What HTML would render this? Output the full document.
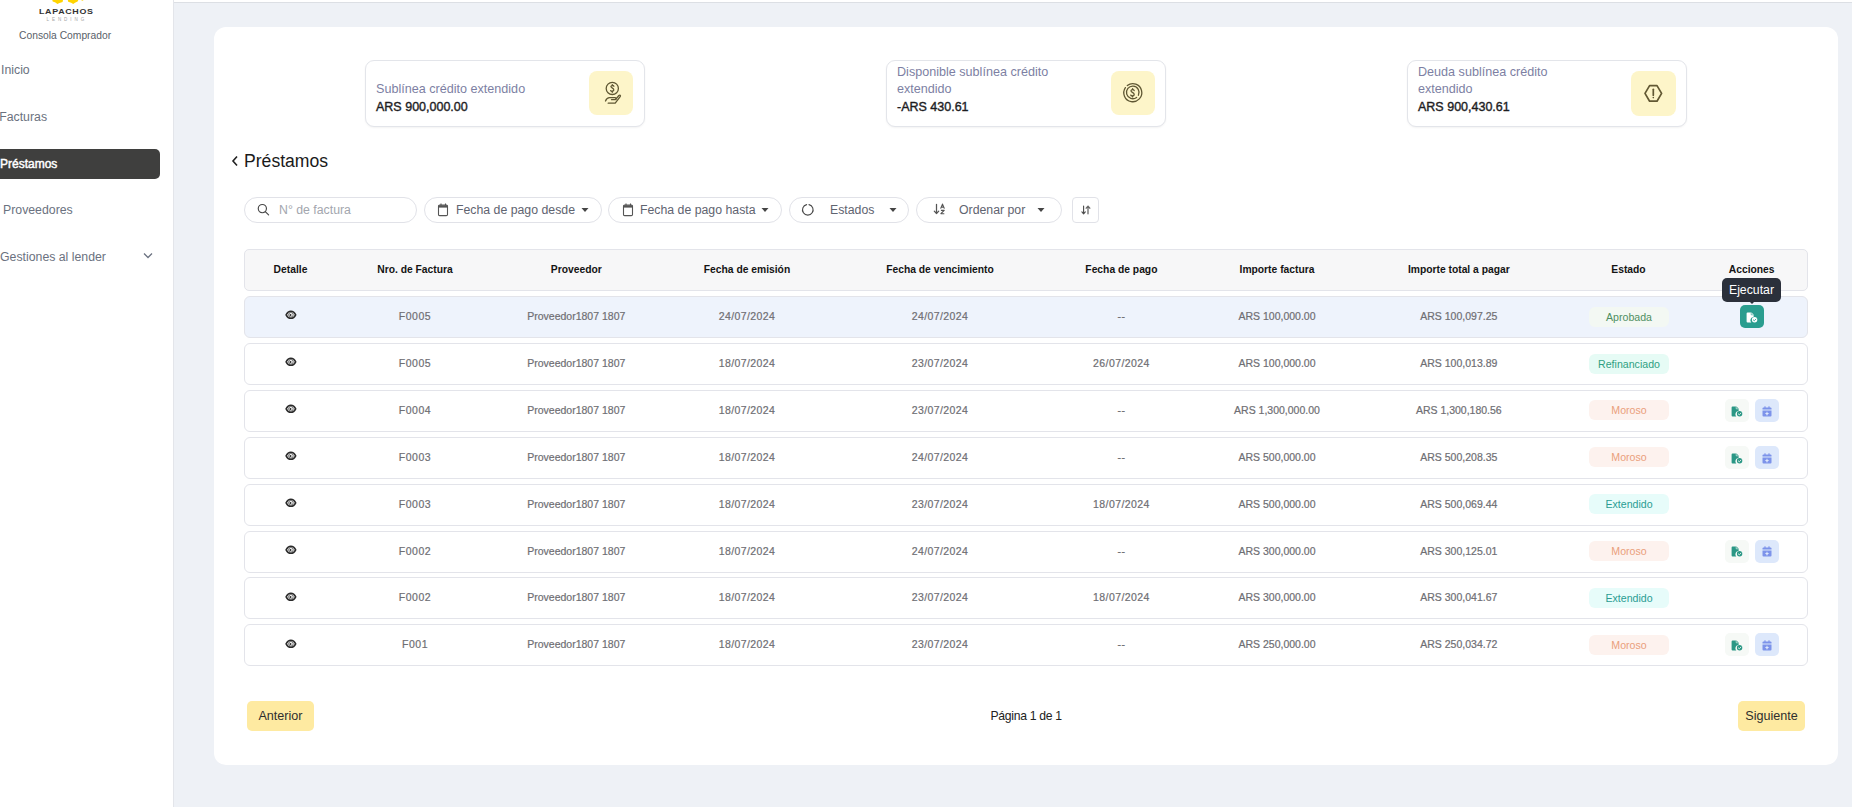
<!DOCTYPE html>
<html>
<head>
<meta charset="utf-8">
<style>
*{box-sizing:border-box;margin:0;padding:0}
html,body{width:1852px;height:807px;overflow:hidden}
body{background:#eef1f6;font-family:"Liberation Sans",sans-serif;position:relative;color:#222}
.abs{position:absolute}
#sidebar{left:0;top:0;width:174px;height:807px;background:#fff;border-right:1px solid #e3e5ea}
#topbar{left:174px;top:0;width:1678px;height:3px;background:#fff;border-bottom:1px solid #dcdfe4}
#card{left:214px;top:27px;width:1624px;height:738px;background:#fff;border-radius:12px}
.nav{position:absolute;font-size:12.3px;color:#6b7280;white-space:nowrap;line-height:14px}
.stat{position:absolute;top:60px;width:280px;height:67px;border:1px solid #e3e5ea;border-radius:9px;background:#fff;box-shadow:0 1px 2px rgba(0,0,0,0.05)}
.stat .lbl{position:absolute;left:10px;font-size:12.6px;color:#7d7fa3;line-height:17px}
.stat .val{position:absolute;left:10px;top:38px;font-size:12.5px;font-weight:400;color:#1d1d1f;line-height:16px;-webkit-text-stroke:0.38px #1d1d1f}
.stat .ib{position:absolute;top:10px;width:44px;height:44px;border-radius:8px;background:#fdf5c9}
.pill{position:absolute;top:197px;height:26px;border:1px solid #e1e2e8;border-radius:13px;background:#fff}
.pill span{position:absolute;top:5px;font-size:12.3px;color:#5f6470;white-space:nowrap;line-height:15px}
.row{position:absolute;left:244px;width:1564px;height:42px;border:1px solid #e3e4ea;border-radius:6px;background:#fff}
.row.hd{background:#f7f7f8;border-radius:5px;height:42px}
.row.sel{background:#eef3fc}
.c{position:absolute;top:0px;height:39px;line-height:39px;text-align:center;white-space:nowrap;font-size:10.5px;color:#6e6e73;-webkit-text-stroke:0.2px #6e6e73}
.c.d{letter-spacing:0.4px}
.c.f{letter-spacing:0.55px}
.hd .c{top:0;font-weight:700;color:#141414;font-size:10.3px;-webkit-text-stroke:0}
.badge{position:absolute;left:1589px;width:80px;height:20px;border-radius:6px;font-size:10.6px;line-height:20px;text-align:center}
.abtn{position:absolute;top:8px;width:24px;height:23px;border-radius:5px;display:flex;align-items:center;justify-content:center;padding-top:1.5px}
.c svg{vertical-align:middle}
.btn{position:absolute;top:701px;height:30px;border-radius:5px;background:#feeaa1;font-size:12.6px;line-height:30px;color:#2e2e2e;text-align:center}
</style>
</head>
<body>
<div id="sidebar" class="abs">
  <!-- logo -->
  <svg class="abs" style="left:0;top:0" width="100" height="8" viewBox="0 0 100 8"><path d="M52.3 0 H63 L62.6 2 L59.5 3.1 L57.4 4 L55.4 2.6 L52.7 1.6 Z" fill="#ffd400"/><path d="M67.8 0 H78.3 L77.6 1.4 L75 2.7 L73.2 4 L71.2 2.7 L68.2 1.7 Z" fill="#ffd400"/><circle cx="82.4" cy="0.2" r="0.9" fill="#ffe266"/></svg>
  <div class="abs" style="left:39px;top:8px;font-size:7.8px;font-weight:700;letter-spacing:0.6px;color:#333;line-height:8px;transform:scaleX(1.14);transform-origin:0 0;white-space:nowrap">LAPACHOS</div>
  <div class="abs" style="left:46.5px;top:17px;font-size:4.5px;letter-spacing:2.95px;color:#a5a5a5;line-height:5px;white-space:nowrap">LENDING</div>
  <div class="abs" style="left:19px;top:30px;font-size:10.3px;color:#5a5f6a;line-height:12px;white-space:nowrap">Consola Comprador</div>
  <div class="nav" style="left:1px;top:63px">Inicio</div>
  <div class="nav" style="left:-0.8px;top:110px">Facturas</div>
  <div class="abs" style="left:-10px;top:149px;width:170px;height:30px;border-radius:5px;background:#3f3f3e"></div>
  <div class="nav" style="left:0px;top:157px;color:#fff;font-size:12px;-webkit-text-stroke:0.45px #fff">Préstamos</div>
  <div class="nav" style="left:3px;top:203px">Proveedores</div>
  <div class="nav" style="left:0px;top:250px">Gestiones al lender</div>
  <svg class="abs" style="left:143px;top:252px" width="10" height="7" viewBox="0 0 10 7"><path d="M1 1.5 L5 5.5 L9 1.5" fill="none" stroke="#6b7280" stroke-width="1.3"/></svg>
</div>
<div id="topbar" class="abs"></div>
<div id="card" class="abs"></div>

<!-- stat cards -->
<div class="stat" style="left:365px">
  <div class="lbl" style="top:20px">Sublínea crédito extendido</div>
  <div class="val">ARS 900,000.00</div>
  <div class="ib" style="left:223px"></div>
</div>
<svg class="abs" style="left:595px;top:75px" width="35" height="35" viewBox="0 0 35 35"><g fill="none" stroke="#5f5733" stroke-width="1.3" stroke-linecap="round" stroke-linejoin="round"><circle cx="17.3" cy="13.4" r="6.1"/><path d="M18.9 11.2 C18.4 10.3 16.2 10.2 15.9 11.5 C15.6 12.9 18.9 13 18.8 14.9 C18.7 16.4 16.4 16.6 15.7 15.6"/><path d="M17.3 9.6 V10.4 M17.3 16.5 V17.3"/><path d="M10.5 26 C11.5 23.6 12.6 22.7 14.5 22.7 H20.2 C21.3 22.7 21.3 24.6 20.3 24.7 H16.5"/><path d="M13.2 28.2 H20.2 L25.2 21.6 C25.9 20.6 24.8 19.6 23.9 20.5 L20.6 24.4"/></g></svg>
<div class="stat" style="left:886px">
  <div class="lbl" style="top:3px">Disponible sublínea crédito<br>extendido</div>
  <div class="val">-ARS 430.61</div>
  <div class="ib" style="left:224px"></div>
</div>
<svg class="abs" style="left:1115px;top:75px" width="35" height="35" viewBox="0 0 35 35"><g fill="none" stroke="#5f5733" stroke-width="1.3" stroke-linecap="round"><path d="M12.3 10.6 A9 9 0 1 1 10.4 12.6"/><path d="M21.6 22.4 A6.3 6.3 0 1 1 23.4 20.2"/><path d="M19.2 15.6 C18.8 14.5 16.3 14.2 16 15.7 C15.7 17.3 19.3 17.4 19.2 19.6 C19.1 21.2 16.4 21.3 15.8 20.1"/><path d="M17.6 13.6 V14.3 M17.6 21.2 V21.9"/></g></svg>
<div class="stat" style="left:1407px">
  <div class="lbl" style="top:3px">Deuda sublínea crédito<br>extendido</div>
  <div class="val">ARS 900,430.61</div>
  <div class="ib" style="left:223px;width:45px;height:45px"></div>
</div>
<svg class="abs" style="left:1636px;top:75px" width="35" height="35" viewBox="0 0 35 35"><g fill="none" stroke="#625833" stroke-width="1.7" stroke-linecap="round" stroke-linejoin="round"><path d="M13.6 10.6 H21 L25.6 18.4 L21 26.2 H13.6 L9 18.4 Z"/><path d="M17.3 14.3 V20.2"/></g><circle cx="17.3" cy="22.6" r="0.8" fill="#5c5530"/></svg>

<!-- heading -->
<svg class="abs" style="left:231px;top:155px" width="8" height="12" viewBox="0 0 8 12"><path d="M6 1.5 L2 6 L6 10.5" fill="none" stroke="#222" stroke-width="1.6"/></svg>
<div class="abs" style="left:244px;top:151px;font-size:17.6px;color:#1a1a1a;line-height:20px">Préstamos</div>

<!-- filters -->
<div class="pill" style="left:244px;width:173px"><span style="left:34px;color:#a3a6ae">N° de factura</span></div>
<div class="pill" style="left:424px;width:178px"><span style="left:31px">Fecha de pago desde</span></div>
<div class="pill" style="left:608px;width:174px"><span style="left:31px">Fecha de pago hasta</span></div>
<div class="pill" style="left:789px;width:120px"><span style="left:40px">Estados</span></div>
<div class="pill" style="left:916px;width:146px"><span style="left:42px">Ordenar por</span></div>
<div class="abs" style="left:1072px;top:197px;width:27px;height:26px;border:1px solid #e1e2e8;border-radius:4px;background:#fff"></div>

<svg class="abs" style="left:255px;top:202px" width="16" height="16" viewBox="0 0 16 16"><circle cx="7.35" cy="6.6" r="4.1" fill="none" stroke="#474747" stroke-width="1.15"/><path d="M10.3 9.6 L13.6 12.9" stroke="#474747" stroke-width="1.15" stroke-linecap="round"/></svg>
<svg class="abs" style="left:437px;top:202px" width="12" height="15" viewBox="0 0 12 15"><path d="M1.5 4.2 Q1.5 3 2.7 3 H9.3 Q10.5 3 10.5 4.2 V12.4 Q10.5 13.6 9.3 13.6 H2.7 Q1.5 13.6 1.5 12.4 Z" fill="none" stroke="#555" stroke-width="1.1"/><rect x="1.5" y="3.2" width="9" height="2.4" fill="#555"/><path d="M4 1.6 V3.5 M8.5 1.6 V3.5" stroke="#555" stroke-width="1.1"/></svg>
<svg class="abs" style="left:580.5px;top:207px" width="8" height="6" viewBox="0 0 8 6"><path d="M0.5 1 H7.5 L4 5 Z" fill="#454545"/></svg>
<svg class="abs" style="left:622px;top:202px" width="12" height="15" viewBox="0 0 12 15"><path d="M1.5 4.2 Q1.5 3 2.7 3 H9.3 Q10.5 3 10.5 4.2 V12.4 Q10.5 13.6 9.3 13.6 H2.7 Q1.5 13.6 1.5 12.4 Z" fill="none" stroke="#555" stroke-width="1.1"/><rect x="1.5" y="3.2" width="9" height="2.4" fill="#555"/><path d="M4 1.6 V3.5 M8.5 1.6 V3.5" stroke="#555" stroke-width="1.1"/></svg>
<svg class="abs" style="left:760.5px;top:207px" width="8" height="6" viewBox="0 0 8 6"><path d="M0.5 1 H7.5 L4 5 Z" fill="#454545"/></svg>
<svg class="abs" style="left:800px;top:202px" width="16" height="16" viewBox="0 0 16 16"><path d="M6.6 2.6 A5.3 5.3 0 1 0 9 2.6" fill="none" stroke="#4a4a4a" stroke-width="1.15" stroke-linecap="round"/></svg>
<svg class="abs" style="left:889px;top:207px" width="8" height="6" viewBox="0 0 8 6"><path d="M0.5 1 H7.5 L4 5 Z" fill="#454545"/></svg>
<svg class="abs" style="left:932px;top:202px" width="16" height="14" viewBox="0 0 16 14"><path d="M4.5 2.3 V11.5 M2.3 9.2 L4.5 11.6 L6.7 9.2" fill="none" stroke="#555" stroke-width="1.25" stroke-linecap="round" stroke-linejoin="round"/><path d="M8.6 6.6 L10.5 2.1 L12.4 6.6 M9.3 5.1 H11.7" fill="none" stroke="#555" stroke-width="1.15" stroke-linejoin="round"/><path d="M8.9 8.3 H12.2 L8.9 11.7 H12.3" fill="none" stroke="#555" stroke-width="1.15" stroke-linejoin="round"/></svg>
<svg class="abs" style="left:1037px;top:207px" width="8" height="6" viewBox="0 0 8 6"><path d="M0.5 1 H7.5 L4 5 Z" fill="#454545"/></svg>
<svg class="abs" style="left:1078px;top:203px" width="16" height="14" viewBox="0 0 16 14"><path d="M5.6 3 V10.6 M3.9 8.8 L5.6 10.8 L7.3 8.8" fill="none" stroke="#4a4a4a" stroke-width="1.1" stroke-linecap="round" stroke-linejoin="round"/><path d="M10 10.8 V3.4 M8.2 5.2 L10 3.1 L11.8 5.2" fill="none" stroke="#6a6a6a" stroke-width="1.3" stroke-linecap="round" stroke-linejoin="round"/></svg>

<!-- table -->
<div id="table">
<div class="row hd" style="top:249px"><div class="c " style="left:-74.5px;width:240px">Detalle</div><div class="c " style="left:50.0px;width:240px">Nro. de Factura</div><div class="c " style="left:211.3px;width:240px">Proveedor</div><div class="c " style="left:382.0px;width:240px">Fecha de emisión</div><div class="c " style="left:575.0px;width:240px">Fecha de vencimiento</div><div class="c " style="left:756.4px;width:240px">Fecha de pago</div><div class="c " style="left:912.0px;width:240px">Importe factura</div><div class="c " style="left:1093.8px;width:240px">Importe total a pagar</div><div class="c " style="left:1263.5px;width:240px">Estado</div><div class="c " style="left:1386.7px;width:240px">Acciones</div></div>
<div class="row sel" style="top:296.2px"><div style="position:absolute;left:39.5px;top:13.3px;width:12px;height:10px"><svg style="display:block" width="12" height="10" viewBox="0 0 12 10"><path d="M1.1 4.8 C2.4 2.2 3.9 1.3 5.9 1.3 C7.9 1.3 9.4 2.2 10.7 4.8 C9.4 7.4 7.9 8.3 5.9 8.3 C3.9 8.3 2.4 7.4 1.1 4.8 Z" fill="#fff" stroke="#2a2a2a" stroke-width="1.55" stroke-linejoin="round"/><circle cx="5.9" cy="4.8" r="2.3" fill="#fff" stroke="#3a3a3a" stroke-width="0.75"/><circle cx="5.5" cy="5.1" r="1" fill="#2a2a2a"/></svg></div><div class="c f" style="left:50.0px;width:240px">F0005</div><div class="c " style="left:211.3px;width:240px">Proveedor1807 1807</div><div class="c d" style="left:382.0px;width:240px">24/07/2024</div><div class="c d" style="left:575.0px;width:240px">24/07/2024</div><div class="c d" style="left:756.4px;width:240px">--</div><div class="c " style="left:912.0px;width:240px">ARS 100,000.00</div><div class="c " style="left:1093.8px;width:240px">ARS 100,097.25</div><div class="badge" style="left:1344px;top:9.5px;background:#f3f8f3;color:#4f8f62">Aprobada</div><div class="abtn" style="left:1495px;background:#2a9d8f"><svg width="12" height="11" viewBox="0 0 12 11"><path d="M0.6 1.4 Q0.6 0.4 1.6 0.4 H5.4 L7.6 2.6 V5 A3.3 3.3 0 0 0 5.3 10.6 H1.6 Q0.6 10.6 0.6 9.6 Z" fill="#ffffff"/><path d="M5.2 0.6 V2.8 H7.4" fill="none" stroke="#2a9d8f" stroke-width="0.6"/><circle cx="8.6" cy="7.8" r="2.7" fill="#ffffff"/><path d="M7.3 7.9 L8.3 8.8 L9.9 7.1" fill="none" stroke="#2a9d8f" stroke-width="0.85" stroke-linecap="round"/></svg></div></div>
<div class="row" style="top:343.1px"><div style="position:absolute;left:39.5px;top:13.3px;width:12px;height:10px"><svg style="display:block" width="12" height="10" viewBox="0 0 12 10"><path d="M1.1 4.8 C2.4 2.2 3.9 1.3 5.9 1.3 C7.9 1.3 9.4 2.2 10.7 4.8 C9.4 7.4 7.9 8.3 5.9 8.3 C3.9 8.3 2.4 7.4 1.1 4.8 Z" fill="#fff" stroke="#2a2a2a" stroke-width="1.55" stroke-linejoin="round"/><circle cx="5.9" cy="4.8" r="2.3" fill="#fff" stroke="#3a3a3a" stroke-width="0.75"/><circle cx="5.5" cy="5.1" r="1" fill="#2a2a2a"/></svg></div><div class="c f" style="left:50.0px;width:240px">F0005</div><div class="c " style="left:211.3px;width:240px">Proveedor1807 1807</div><div class="c d" style="left:382.0px;width:240px">18/07/2024</div><div class="c d" style="left:575.0px;width:240px">23/07/2024</div><div class="c d" style="left:756.4px;width:240px">26/07/2024</div><div class="c " style="left:912.0px;width:240px">ARS 100,000.00</div><div class="c " style="left:1093.8px;width:240px">ARS 100,013.89</div><div class="badge" style="left:1344px;top:9.5px;background:#e6fbf5;color:#2f9f82">Refinanciado</div></div>
<div class="row" style="top:389.9px"><div style="position:absolute;left:39.5px;top:13.3px;width:12px;height:10px"><svg style="display:block" width="12" height="10" viewBox="0 0 12 10"><path d="M1.1 4.8 C2.4 2.2 3.9 1.3 5.9 1.3 C7.9 1.3 9.4 2.2 10.7 4.8 C9.4 7.4 7.9 8.3 5.9 8.3 C3.9 8.3 2.4 7.4 1.1 4.8 Z" fill="#fff" stroke="#2a2a2a" stroke-width="1.55" stroke-linejoin="round"/><circle cx="5.9" cy="4.8" r="2.3" fill="#fff" stroke="#3a3a3a" stroke-width="0.75"/><circle cx="5.5" cy="5.1" r="1" fill="#2a2a2a"/></svg></div><div class="c f" style="left:50.0px;width:240px">F0004</div><div class="c " style="left:211.3px;width:240px">Proveedor1807 1807</div><div class="c d" style="left:382.0px;width:240px">18/07/2024</div><div class="c d" style="left:575.0px;width:240px">23/07/2024</div><div class="c d" style="left:756.4px;width:240px">--</div><div class="c " style="left:912.0px;width:240px">ARS 1,300,000.00</div><div class="c " style="left:1093.8px;width:240px">ARS 1,300,180.56</div><div class="badge" style="left:1344px;top:9.5px;background:#fdf2ee;color:#eaa07c">Moroso</div><div class="abtn" style="left:1480px;background:#f6f9f6"><svg width="12" height="11" viewBox="0 0 12 11"><path d="M0.6 1.4 Q0.6 0.4 1.6 0.4 H5.4 L7.6 2.6 V5 A3.3 3.3 0 0 0 5.3 10.6 H1.6 Q0.6 10.6 0.6 9.6 Z" fill="#2a9785"/><path d="M5.2 0.6 V2.8 H7.4" fill="none" stroke="#f6f9f6" stroke-width="0.6"/><circle cx="8.6" cy="7.8" r="2.7" fill="#2a9785"/><path d="M7.3 7.9 L8.3 8.8 L9.9 7.1" fill="none" stroke="#f6f9f6" stroke-width="0.85" stroke-linecap="round"/></svg></div><div class="abtn" style="left:1510px;background:#dde8fb"><svg width="10" height="11" viewBox="0 0 10 11"><path d="M0.5 3.6 V2.6 Q0.5 1.6 1.5 1.6 H8.5 Q9.5 1.6 9.5 2.6 V3.6 Z" fill="#7d93ea"/><rect x="2.4" y="0.2" width="1.2" height="2" rx="0.4" fill="#7d93ea"/><rect x="6.4" y="0.2" width="1.2" height="2" rx="0.4" fill="#7d93ea"/><path d="M0.5 4.6 H9.5 V9.5 Q9.5 10.5 8.5 10.5 H1.5 Q0.5 10.5 0.5 9.5 Z" fill="#7d93ea"/><path d="M5 5.3 L5.7 7 L7.3 7.6 L5.7 8.2 L5 9.9 L4.3 8.2 L2.7 7.6 L4.3 7 Z" fill="#dfe9fb"/></svg></div></div>
<div class="row" style="top:436.8px"><div style="position:absolute;left:39.5px;top:13.3px;width:12px;height:10px"><svg style="display:block" width="12" height="10" viewBox="0 0 12 10"><path d="M1.1 4.8 C2.4 2.2 3.9 1.3 5.9 1.3 C7.9 1.3 9.4 2.2 10.7 4.8 C9.4 7.4 7.9 8.3 5.9 8.3 C3.9 8.3 2.4 7.4 1.1 4.8 Z" fill="#fff" stroke="#2a2a2a" stroke-width="1.55" stroke-linejoin="round"/><circle cx="5.9" cy="4.8" r="2.3" fill="#fff" stroke="#3a3a3a" stroke-width="0.75"/><circle cx="5.5" cy="5.1" r="1" fill="#2a2a2a"/></svg></div><div class="c f" style="left:50.0px;width:240px">F0003</div><div class="c " style="left:211.3px;width:240px">Proveedor1807 1807</div><div class="c d" style="left:382.0px;width:240px">18/07/2024</div><div class="c d" style="left:575.0px;width:240px">24/07/2024</div><div class="c d" style="left:756.4px;width:240px">--</div><div class="c " style="left:912.0px;width:240px">ARS 500,000.00</div><div class="c " style="left:1093.8px;width:240px">ARS 500,208.35</div><div class="badge" style="left:1344px;top:9.5px;background:#fdf2ee;color:#eaa07c">Moroso</div><div class="abtn" style="left:1480px;background:#f6f9f6"><svg width="12" height="11" viewBox="0 0 12 11"><path d="M0.6 1.4 Q0.6 0.4 1.6 0.4 H5.4 L7.6 2.6 V5 A3.3 3.3 0 0 0 5.3 10.6 H1.6 Q0.6 10.6 0.6 9.6 Z" fill="#2a9785"/><path d="M5.2 0.6 V2.8 H7.4" fill="none" stroke="#f6f9f6" stroke-width="0.6"/><circle cx="8.6" cy="7.8" r="2.7" fill="#2a9785"/><path d="M7.3 7.9 L8.3 8.8 L9.9 7.1" fill="none" stroke="#f6f9f6" stroke-width="0.85" stroke-linecap="round"/></svg></div><div class="abtn" style="left:1510px;background:#dde8fb"><svg width="10" height="11" viewBox="0 0 10 11"><path d="M0.5 3.6 V2.6 Q0.5 1.6 1.5 1.6 H8.5 Q9.5 1.6 9.5 2.6 V3.6 Z" fill="#7d93ea"/><rect x="2.4" y="0.2" width="1.2" height="2" rx="0.4" fill="#7d93ea"/><rect x="6.4" y="0.2" width="1.2" height="2" rx="0.4" fill="#7d93ea"/><path d="M0.5 4.6 H9.5 V9.5 Q9.5 10.5 8.5 10.5 H1.5 Q0.5 10.5 0.5 9.5 Z" fill="#7d93ea"/><path d="M5 5.3 L5.7 7 L7.3 7.6 L5.7 8.2 L5 9.9 L4.3 8.2 L2.7 7.6 L4.3 7 Z" fill="#dfe9fb"/></svg></div></div>
<div class="row" style="top:483.7px"><div style="position:absolute;left:39.5px;top:13.3px;width:12px;height:10px"><svg style="display:block" width="12" height="10" viewBox="0 0 12 10"><path d="M1.1 4.8 C2.4 2.2 3.9 1.3 5.9 1.3 C7.9 1.3 9.4 2.2 10.7 4.8 C9.4 7.4 7.9 8.3 5.9 8.3 C3.9 8.3 2.4 7.4 1.1 4.8 Z" fill="#fff" stroke="#2a2a2a" stroke-width="1.55" stroke-linejoin="round"/><circle cx="5.9" cy="4.8" r="2.3" fill="#fff" stroke="#3a3a3a" stroke-width="0.75"/><circle cx="5.5" cy="5.1" r="1" fill="#2a2a2a"/></svg></div><div class="c f" style="left:50.0px;width:240px">F0003</div><div class="c " style="left:211.3px;width:240px">Proveedor1807 1807</div><div class="c d" style="left:382.0px;width:240px">18/07/2024</div><div class="c d" style="left:575.0px;width:240px">23/07/2024</div><div class="c d" style="left:756.4px;width:240px">18/07/2024</div><div class="c " style="left:912.0px;width:240px">ARS 500,000.00</div><div class="c " style="left:1093.8px;width:240px">ARS 500,069.44</div><div class="badge" style="left:1344px;top:9.5px;background:#e7fcfa;color:#2a9c93">Extendido</div></div>
<div class="row" style="top:530.5px"><div style="position:absolute;left:39.5px;top:13.3px;width:12px;height:10px"><svg style="display:block" width="12" height="10" viewBox="0 0 12 10"><path d="M1.1 4.8 C2.4 2.2 3.9 1.3 5.9 1.3 C7.9 1.3 9.4 2.2 10.7 4.8 C9.4 7.4 7.9 8.3 5.9 8.3 C3.9 8.3 2.4 7.4 1.1 4.8 Z" fill="#fff" stroke="#2a2a2a" stroke-width="1.55" stroke-linejoin="round"/><circle cx="5.9" cy="4.8" r="2.3" fill="#fff" stroke="#3a3a3a" stroke-width="0.75"/><circle cx="5.5" cy="5.1" r="1" fill="#2a2a2a"/></svg></div><div class="c f" style="left:50.0px;width:240px">F0002</div><div class="c " style="left:211.3px;width:240px">Proveedor1807 1807</div><div class="c d" style="left:382.0px;width:240px">18/07/2024</div><div class="c d" style="left:575.0px;width:240px">24/07/2024</div><div class="c d" style="left:756.4px;width:240px">--</div><div class="c " style="left:912.0px;width:240px">ARS 300,000.00</div><div class="c " style="left:1093.8px;width:240px">ARS 300,125.01</div><div class="badge" style="left:1344px;top:9.5px;background:#fdf2ee;color:#eaa07c">Moroso</div><div class="abtn" style="left:1480px;background:#f6f9f6"><svg width="12" height="11" viewBox="0 0 12 11"><path d="M0.6 1.4 Q0.6 0.4 1.6 0.4 H5.4 L7.6 2.6 V5 A3.3 3.3 0 0 0 5.3 10.6 H1.6 Q0.6 10.6 0.6 9.6 Z" fill="#2a9785"/><path d="M5.2 0.6 V2.8 H7.4" fill="none" stroke="#f6f9f6" stroke-width="0.6"/><circle cx="8.6" cy="7.8" r="2.7" fill="#2a9785"/><path d="M7.3 7.9 L8.3 8.8 L9.9 7.1" fill="none" stroke="#f6f9f6" stroke-width="0.85" stroke-linecap="round"/></svg></div><div class="abtn" style="left:1510px;background:#dde8fb"><svg width="10" height="11" viewBox="0 0 10 11"><path d="M0.5 3.6 V2.6 Q0.5 1.6 1.5 1.6 H8.5 Q9.5 1.6 9.5 2.6 V3.6 Z" fill="#7d93ea"/><rect x="2.4" y="0.2" width="1.2" height="2" rx="0.4" fill="#7d93ea"/><rect x="6.4" y="0.2" width="1.2" height="2" rx="0.4" fill="#7d93ea"/><path d="M0.5 4.6 H9.5 V9.5 Q9.5 10.5 8.5 10.5 H1.5 Q0.5 10.5 0.5 9.5 Z" fill="#7d93ea"/><path d="M5 5.3 L5.7 7 L7.3 7.6 L5.7 8.2 L5 9.9 L4.3 8.2 L2.7 7.6 L4.3 7 Z" fill="#dfe9fb"/></svg></div></div>
<div class="row" style="top:577.4px"><div style="position:absolute;left:39.5px;top:13.3px;width:12px;height:10px"><svg style="display:block" width="12" height="10" viewBox="0 0 12 10"><path d="M1.1 4.8 C2.4 2.2 3.9 1.3 5.9 1.3 C7.9 1.3 9.4 2.2 10.7 4.8 C9.4 7.4 7.9 8.3 5.9 8.3 C3.9 8.3 2.4 7.4 1.1 4.8 Z" fill="#fff" stroke="#2a2a2a" stroke-width="1.55" stroke-linejoin="round"/><circle cx="5.9" cy="4.8" r="2.3" fill="#fff" stroke="#3a3a3a" stroke-width="0.75"/><circle cx="5.5" cy="5.1" r="1" fill="#2a2a2a"/></svg></div><div class="c f" style="left:50.0px;width:240px">F0002</div><div class="c " style="left:211.3px;width:240px">Proveedor1807 1807</div><div class="c d" style="left:382.0px;width:240px">18/07/2024</div><div class="c d" style="left:575.0px;width:240px">23/07/2024</div><div class="c d" style="left:756.4px;width:240px">18/07/2024</div><div class="c " style="left:912.0px;width:240px">ARS 300,000.00</div><div class="c " style="left:1093.8px;width:240px">ARS 300,041.67</div><div class="badge" style="left:1344px;top:9.5px;background:#e7fcfa;color:#2a9c93">Extendido</div></div>
<div class="row" style="top:624.3px"><div style="position:absolute;left:39.5px;top:13.3px;width:12px;height:10px"><svg style="display:block" width="12" height="10" viewBox="0 0 12 10"><path d="M1.1 4.8 C2.4 2.2 3.9 1.3 5.9 1.3 C7.9 1.3 9.4 2.2 10.7 4.8 C9.4 7.4 7.9 8.3 5.9 8.3 C3.9 8.3 2.4 7.4 1.1 4.8 Z" fill="#fff" stroke="#2a2a2a" stroke-width="1.55" stroke-linejoin="round"/><circle cx="5.9" cy="4.8" r="2.3" fill="#fff" stroke="#3a3a3a" stroke-width="0.75"/><circle cx="5.5" cy="5.1" r="1" fill="#2a2a2a"/></svg></div><div class="c f" style="left:50.0px;width:240px">F001</div><div class="c " style="left:211.3px;width:240px">Proveedor1807 1807</div><div class="c d" style="left:382.0px;width:240px">18/07/2024</div><div class="c d" style="left:575.0px;width:240px">23/07/2024</div><div class="c d" style="left:756.4px;width:240px">--</div><div class="c " style="left:912.0px;width:240px">ARS 250,000.00</div><div class="c " style="left:1093.8px;width:240px">ARS 250,034.72</div><div class="badge" style="left:1344px;top:9.5px;background:#fdf2ee;color:#eaa07c">Moroso</div><div class="abtn" style="left:1480px;background:#f6f9f6"><svg width="12" height="11" viewBox="0 0 12 11"><path d="M0.6 1.4 Q0.6 0.4 1.6 0.4 H5.4 L7.6 2.6 V5 A3.3 3.3 0 0 0 5.3 10.6 H1.6 Q0.6 10.6 0.6 9.6 Z" fill="#2a9785"/><path d="M5.2 0.6 V2.8 H7.4" fill="none" stroke="#f6f9f6" stroke-width="0.6"/><circle cx="8.6" cy="7.8" r="2.7" fill="#2a9785"/><path d="M7.3 7.9 L8.3 8.8 L9.9 7.1" fill="none" stroke="#f6f9f6" stroke-width="0.85" stroke-linecap="round"/></svg></div><div class="abtn" style="left:1510px;background:#dde8fb"><svg width="10" height="11" viewBox="0 0 10 11"><path d="M0.5 3.6 V2.6 Q0.5 1.6 1.5 1.6 H8.5 Q9.5 1.6 9.5 2.6 V3.6 Z" fill="#7d93ea"/><rect x="2.4" y="0.2" width="1.2" height="2" rx="0.4" fill="#7d93ea"/><rect x="6.4" y="0.2" width="1.2" height="2" rx="0.4" fill="#7d93ea"/><path d="M0.5 4.6 H9.5 V9.5 Q9.5 10.5 8.5 10.5 H1.5 Q0.5 10.5 0.5 9.5 Z" fill="#7d93ea"/><path d="M5 5.3 L5.7 7 L7.3 7.6 L5.7 8.2 L5 9.9 L4.3 8.2 L2.7 7.6 L4.3 7 Z" fill="#dfe9fb"/></svg></div></div>
</div><!--/table-->

<!-- tooltip -->
<div class="abs" style="left:1722px;top:278px;width:59px;height:24px;border-radius:5px;background:#2b303b;color:#fff;font-size:12.3px;line-height:24px;text-align:center">Ejecutar</div>
<div class="abs" style="left:1750px;top:302px;width:0;height:0;border-left:2px solid transparent;border-right:2px solid transparent;border-top:2px solid #2b303b"></div>

<!-- pagination -->
<div class="btn" style="left:247px;width:67px">Anterior</div>
<div class="abs" style="left:990.5px;top:708.5px;font-size:12.2px;letter-spacing:-0.3px;color:#222;line-height:14px">Página 1 de 1</div>
<div class="btn" style="left:1738px;width:67px">Siguiente</div>

</body>
</html>
